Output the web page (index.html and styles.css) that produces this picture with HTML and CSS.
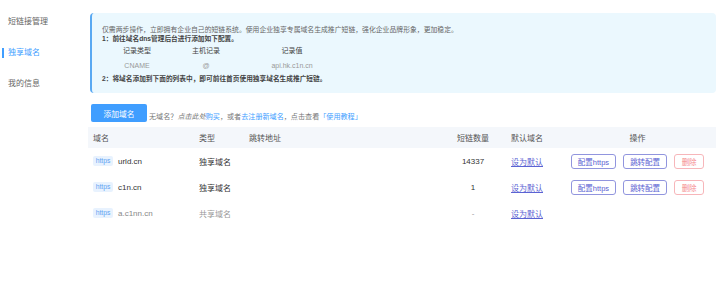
FILE: index.html
```html
<!DOCTYPE html>
<html lang="zh-CN">
<head>
  <meta charset="UTF-8">
  <title>独享域名</title>
  <link rel="stylesheet" href="styles.css">
</head>
<body>

<div class="layout">
  <div class="sidebar">
    <div class="menu-item">短链接管理</div>
    <div class="menu-item active">独享域名</div>
    <div class="menu-item">我的信息</div>
  </div>

  <div class="main">
    <div class="notice">
      <p class="intro">仅需两步操作，立即拥有企业自己的短链系统。使用企业独享专属域名生成推广短链，强化企业品牌形象，更加稳定。</p>
      <p class="step">1：前往域名dns管理后台进行添加如下配置。</p>
      <div class="record record-head">
        <span>记录类型</span><span>主机记录</span><span>记录值</span>
      </div>
      <div class="record record-value">
        <span>CNAME</span><span>@</span><span>api.hk.c1n.cn</span>
      </div>
      <p class="step step-last">2：将域名添加到下面的列表中，即可前往首页使用独享域名生成推广短链。</p>
    </div>

    <div class="toolbar">
      <button class="btn-primary">添加域名</button>
      <span class="hint">无域名？<em>点击此处</em><a>购买</a>，或者<a>去注册新域名</a>，点击查看<a>「使用教程」</a></span>
    </div>

    <table class="domains">
      <colgroup>
        <col class="c-domain"><col class="c-type"><col class="c-jump"><col class="c-count"><col class="c-default"><col>
      </colgroup>
      <thead>
        <tr>
          <th>域名</th>
          <th>类型</th>
          <th>跳转地址</th>
          <th class="center">短链数量</th>
          <th>默认域名</th>
          <th class="center">操作</th>
        </tr>
      </thead>
      <tbody>
        <tr>
          <td><span class="tag">https</span><span class="host">urld.cn</span></td>
          <td>独享域名</td>
          <td></td>
          <td class="center">14337</td>
          <td><a class="link">设为默认</a></td>
          <td class="center ops">
            <button class="btn-line">配置https</button>
            <button class="btn-line">跳转配置</button>
            <button class="btn-line btn-danger">删除</button>
          </td>
        </tr>
        <tr>
          <td><span class="tag">https</span><span class="host">c1n.cn</span></td>
          <td>独享域名</td>
          <td></td>
          <td class="center">1</td>
          <td><a class="link">设为默认</a></td>
          <td class="center ops">
            <button class="btn-line">配置https</button>
            <button class="btn-line">跳转配置</button>
            <button class="btn-line btn-danger">删除</button>
          </td>
        </tr>
        <tr class="shared">
          <td><span class="tag">https</span><span class="host">a.c1nn.cn</span></td>
          <td>共享域名</td>
          <td></td>
          <td class="center">-</td>
          <td><a class="link">设为默认</a></td>
          <td></td>
        </tr>
      </tbody>
    </table>
  </div>
</div>

</body>
</html>
```

FILE: styles.css
```css
body { margin: 0; background: #fff; font-family: "Liberation Sans", "Noto Sans CJK SC", sans-serif; color: #333; }
.layout { display: flex; width: 720px; }

.sidebar { width: 88px; flex: none; padding-top: 6px; }
.menu-item { height: 31px; line-height: 31px; padding-left: 8px; font-size: 8px; color: #666; }
.menu-item.active { color: #409eff; }
.menu-item.active::before { content: ""; display: inline-block; width: 2px; height: 10px; background: #409eff; margin-left: -6px; margin-right: 4px; vertical-align: middle; }

.main { flex: 1; padding-right: 4px; padding-top: 13px; }

.notice { margin-left: 2px; background: #ebf8fe; border-left: 2px solid #5aa9f2; border-radius: 4px; padding: 11.5px 10px 9.5px 10px; font-size: 6.7px; color: #666; }
.notice p { margin: 0; line-height: 9px; white-space: nowrap; }
.notice .intro { font-size: 6.85px; color: #666; }
.notice .step { color: #444; font-weight: bold; }
.notice .step-last { line-height: 11px; }
.record { display: grid; grid-template-columns: 50px 88px 84px; margin-left: 10px; line-height: 15px; text-align: center; font-size: 7px; }
.record-head { color: #444; }
.record-value { color: #999; }

.toolbar { display: flex; align-items: flex-end; margin-top: 11px; padding-left: 3px; }
.btn-primary { width: 56px; height: 18px; padding: 0; border: none; border-radius: 2px; background: #409eff; color: #fff; font-family: inherit; font-size: 7.75px; }
.hint { margin-left: 2px; font-size: 7.1px; line-height: 10px; color: #777; }
.hint em { font-style: italic; }
.hint a { color: #409eff; }

.domains { width: 628px; margin-top: 5px; border-collapse: collapse; table-layout: fixed; font-size: 8px; }
.c-domain { width: 106px; }
.c-type { width: 50px; }
.c-jump { width: 196px; }
.c-count { width: 66px; }
.c-default { width: 53px; }
.domains th { height: 21px; padding: 0 0 0 5px; background: #f4f7fb; font-weight: normal; color: #555; text-align: left; }
.domains td { height: 26px; padding: 0 0 0 5px; color: #333; }
.domains .center { text-align: center; padding-left: 0; }
.tag { display: inline-block; width: 20px; height: 10px; line-height: 10px; border-radius: 2px; background: #e8f2fe; color: #5fa3f2; font-size: 6.8px; text-align: center; vertical-align: middle; }
.host { margin-left: 5px; vertical-align: middle; }
.link { color: #5b63d3; text-decoration: underline; }
.shared td { color: #999; }
.shared .host { color: #888; }

.ops { font-size: 0; }
.btn-line { height: 15px; padding: 0 6px; margin: 0 3.5px; border: 1px solid #9195de; border-radius: 3px; background: #fff; color: #5b63d3; font-family: inherit; font-size: 7.5px; vertical-align: middle; }
.btn-danger { padding: 0 6.5px; border-color: #f7b6ba; color: #f58a8f; }
```
